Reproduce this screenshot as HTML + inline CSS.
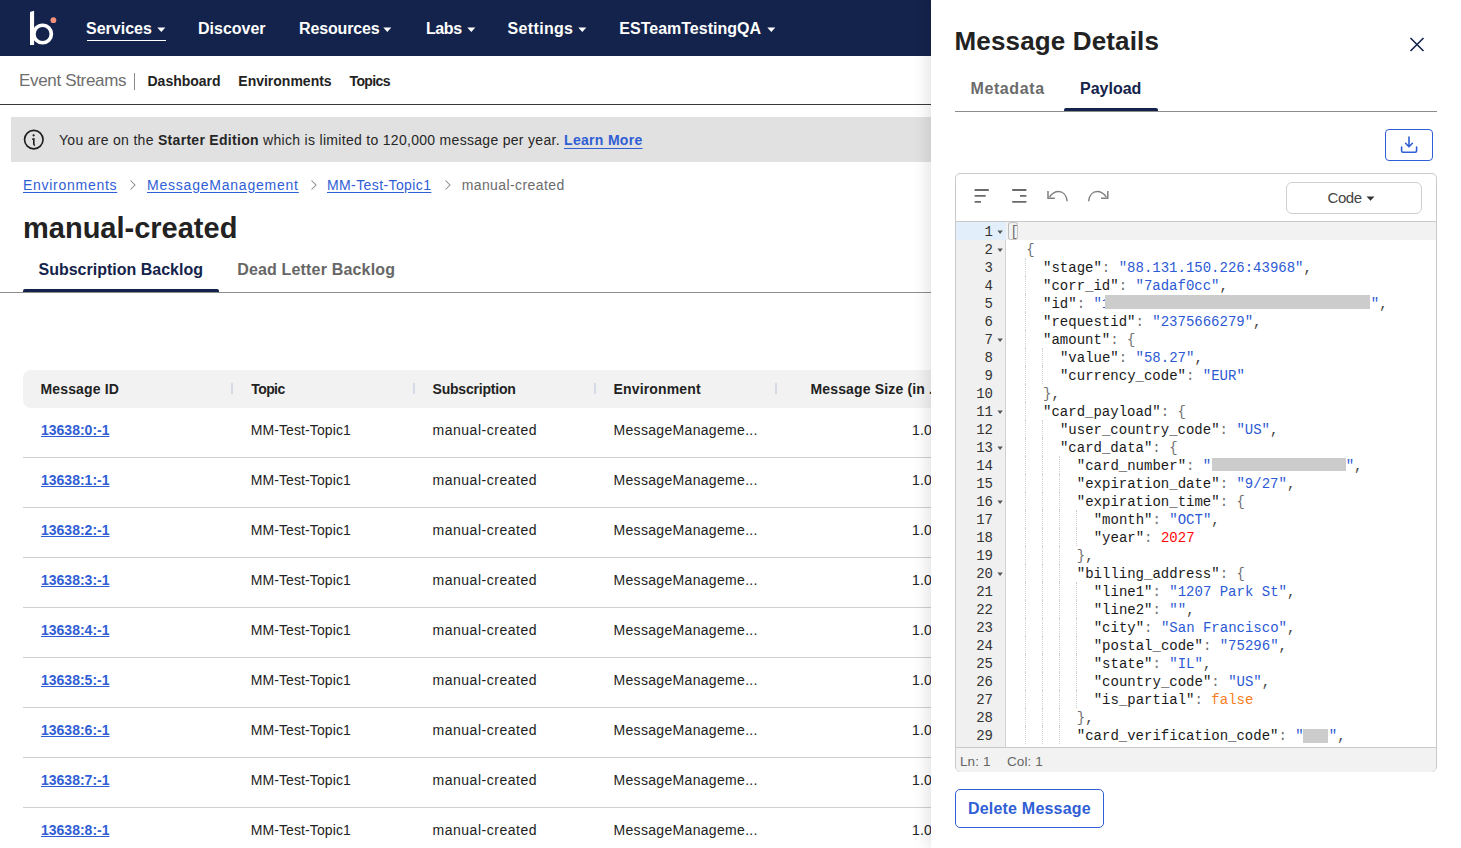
<!DOCTYPE html><html><head><meta charset="utf-8"><style>
html,body{margin:0;padding:0;width:1461px;height:848px;overflow:hidden;background:#fff;font-family:'Liberation Sans', sans-serif}
.t{position:absolute;white-space:pre}
.r{position:absolute}
.cl{position:absolute;white-space:pre;font-family:'Liberation Mono', monospace;font-size:14px;line-height:18px;height:18px}
.ln{position:absolute;right:13px;white-space:pre;font-family:'Liberation Mono', monospace;font-size:14px;line-height:18px;color:#333;text-align:right}
.ig{position:absolute;width:0;height:18px;border-left:1px dotted #cfcfcf}
</style></head><body><div class="r" style="left:0px;top:0px;width:1461px;height:56px;background:#14234b"></div>
<svg class="r" style="left:0;top:0" width="80" height="56" viewBox="0 0 80 56">
<path d="M30 12 L34.1 10.7 V45 H30 Z" fill="#fff"/>
<circle cx="42.6" cy="34" r="8.75" fill="none" stroke="#fff" stroke-width="3.7"/>
<circle cx="53.4" cy="20.2" r="2.9" fill="#f4917b"/>
</svg>
<div id="nav0" class="t" style="left:86.00px;top:21.46px;font-size:16px;line-height:16px;font-weight:700;color:#fff;letter-spacing:0px;font-family:'Liberation Sans', sans-serif;">Services</div>
<svg class="r" style="left:157.0px;top:26.9px" width="9" height="6" viewBox="0 0 9 6"><path d="M0.3 0.4 L8.3 0.4 L4.3 5 Z" fill="#fff"/></svg>
<div id="nav1" class="t" style="left:198.00px;top:21.46px;font-size:16px;line-height:16px;font-weight:700;color:#fff;letter-spacing:0px;font-family:'Liberation Sans', sans-serif;">Discover</div>
<div id="nav2" class="t" style="left:299.00px;top:21.46px;font-size:16px;line-height:16px;font-weight:700;color:#fff;letter-spacing:-0.15px;font-family:'Liberation Sans', sans-serif;">Resources</div>
<svg class="r" style="left:383.40000000000003px;top:26.9px" width="9" height="6" viewBox="0 0 9 6"><path d="M0.3 0.4 L8.3 0.4 L4.3 5 Z" fill="#fff"/></svg>
<div id="nav3" class="t" style="left:425.90px;top:21.46px;font-size:16px;line-height:16px;font-weight:700;color:#fff;letter-spacing:-0.35px;font-family:'Liberation Sans', sans-serif;">Labs</div>
<svg class="r" style="left:466.90000000000003px;top:26.9px" width="9" height="6" viewBox="0 0 9 6"><path d="M0.3 0.4 L8.3 0.4 L4.3 5 Z" fill="#fff"/></svg>
<div id="nav4" class="t" style="left:507.60px;top:21.46px;font-size:16px;line-height:16px;font-weight:700;color:#fff;letter-spacing:0.33px;font-family:'Liberation Sans', sans-serif;">Settings</div>
<svg class="r" style="left:577.6px;top:26.9px" width="9" height="6" viewBox="0 0 9 6"><path d="M0.3 0.4 L8.3 0.4 L4.3 5 Z" fill="#fff"/></svg>
<div id="nav5" class="t" style="left:619.30px;top:21.46px;font-size:16px;line-height:16px;font-weight:700;color:#fff;letter-spacing:0px;font-family:'Liberation Sans', sans-serif;">ESTeamTestingQA</div>
<svg class="r" style="left:766.6px;top:26.9px" width="9" height="6" viewBox="0 0 9 6"><path d="M0.3 0.4 L8.3 0.4 L4.3 5 Z" fill="#fff"/></svg>
<div class="r" style="left:87px;top:39.7px;width:79px;height:1.7px;background:#fff"></div>
<div id="es" class="t" style="left:19.00px;top:72.11px;font-size:17px;line-height:17px;font-weight:400;color:#6e6e6e;letter-spacing:-0.33px;font-family:'Liberation Sans', sans-serif;">Event Streams</div>
<div class="r" style="left:134.2px;top:73px;width:1.3px;height:16.7px;background:#8a8a8a"></div>
<div id="sn0" class="t" style="left:147.50px;top:74.15px;font-size:14px;line-height:14px;font-weight:700;color:#222222;letter-spacing:0px;font-family:'Liberation Sans', sans-serif;">Dashboard</div>
<div id="sn1" class="t" style="left:238.30px;top:74.15px;font-size:14px;line-height:14px;font-weight:700;color:#222222;letter-spacing:0px;font-family:'Liberation Sans', sans-serif;">Environments</div>
<div id="sn2" class="t" style="left:349.50px;top:74.15px;font-size:14px;line-height:14px;font-weight:700;color:#222222;letter-spacing:-0.6px;font-family:'Liberation Sans', sans-serif;">Topics</div>
<div class="r" style="left:0px;top:103.5px;width:1461px;height:1.2px;background:#3a3a3a"></div>
<div class="r" style="left:11px;top:117px;width:1450px;height:45px;background:#e1e1e1"></div>
<svg class="r" style="left:22px;top:128px" width="24" height="24" viewBox="0 0 24 24">
<circle cx="11.8" cy="11.6" r="9.25" fill="none" stroke="#1e1e1e" stroke-width="1.65"/>
<circle cx="11.6" cy="7.3" r="1.1" fill="#1e1e1e"/>
<path d="M10.2 11.2 L11.8 10.9 V16 Q11.9 17.1 12.9 17.4" fill="none" stroke="#1e1e1e" stroke-width="1.6"/>
</svg>
<div id="ban" class="t" style="left:59.00px;top:133.05px;font-size:14px;line-height:14px;font-weight:400;color:#262626;letter-spacing:0.3px;font-family:'Liberation Sans', sans-serif;">You are on the <b>Starter Edition</b> which is limited to 120,000 message per year. <span style="color:#2f5ed5;font-weight:700;text-decoration:underline;text-underline-offset:3px">Learn More</span></div>
<div id="bc0" class="t" style="left:23.00px;top:177.65px;font-size:14px;line-height:14px;font-weight:400;color:#2f5ed5;letter-spacing:0.72px;font-family:'Liberation Sans', sans-serif;text-decoration:underline;text-underline-offset:2px;">Environments</div>
<div id="bc1" class="t" style="left:147.00px;top:177.65px;font-size:14px;line-height:14px;font-weight:400;color:#2f5ed5;letter-spacing:0.78px;font-family:'Liberation Sans', sans-serif;text-decoration:underline;text-underline-offset:2px;">MessageManagement</div>
<div id="bc2" class="t" style="left:327.00px;top:177.65px;font-size:14px;line-height:14px;font-weight:400;color:#2f5ed5;letter-spacing:0.4px;font-family:'Liberation Sans', sans-serif;text-decoration:underline;text-underline-offset:2px;">MM-Test-Topic1</div>
<div id="bc3" class="t" style="left:461.70px;top:177.65px;font-size:14px;line-height:14px;font-weight:400;color:#6b6b6b;letter-spacing:0.4px;font-family:'Liberation Sans', sans-serif;">manual-created</div>
<svg class="r" style="left:129.4px;top:179px" width="8" height="12" viewBox="0 0 8 12"><path d="M1.5 1.5 L6 6 L1.5 10.5" fill="none" stroke="#8a8a8a" stroke-width="1.05"/></svg>
<svg class="r" style="left:310.09999999999997px;top:179px" width="8" height="12" viewBox="0 0 8 12"><path d="M1.5 1.5 L6 6 L1.5 10.5" fill="none" stroke="#8a8a8a" stroke-width="1.05"/></svg>
<svg class="r" style="left:443.79999999999995px;top:179px" width="8" height="12" viewBox="0 0 8 12"><path d="M1.5 1.5 L6 6 L1.5 10.5" fill="none" stroke="#8a8a8a" stroke-width="1.05"/></svg>
<div id="title" class="t" style="left:23.00px;top:213.95px;font-size:29px;line-height:29px;font-weight:700;color:#222222;letter-spacing:0px;font-family:'Liberation Sans', sans-serif;">manual-created</div>
<div id="tab0" class="t" style="left:38.50px;top:261.96px;font-size:16px;line-height:16px;font-weight:700;color:#14234b;letter-spacing:0px;font-family:'Liberation Sans', sans-serif;">Subscription Backlog</div>
<div id="tab1" class="t" style="left:237.20px;top:261.96px;font-size:16px;line-height:16px;font-weight:700;color:#666;letter-spacing:0.17px;font-family:'Liberation Sans', sans-serif;">Dead Letter Backlog</div>
<div class="r" style="left:0px;top:291.5px;width:1461px;height:1.2px;background:#8c8c8c"></div>
<div class="r" style="left:23px;top:289px;width:196px;height:3px;background:#14234b;border-radius:2px 2px 0 0"></div>
<div class="r" style="left:23px;top:370px;width:1438px;height:38px;background:#f2f2f2;border-radius:8px 0 0 8px"></div>
<div id="th0" class="t" style="left:40.50px;top:382.45px;font-size:14px;line-height:14px;font-weight:700;color:#222222;letter-spacing:0.15px;font-family:'Liberation Sans', sans-serif;">Message ID</div>
<div id="th1" class="t" style="left:251.30px;top:382.45px;font-size:14px;line-height:14px;font-weight:700;color:#222222;letter-spacing:-0.6px;font-family:'Liberation Sans', sans-serif;">Topic</div>
<div id="th2" class="t" style="left:432.50px;top:382.45px;font-size:14px;line-height:14px;font-weight:700;color:#222222;letter-spacing:-0.2px;font-family:'Liberation Sans', sans-serif;">Subscription</div>
<div id="th3" class="t" style="left:613.50px;top:382.45px;font-size:14px;line-height:14px;font-weight:700;color:#222222;letter-spacing:0.15px;font-family:'Liberation Sans', sans-serif;">Environment</div>
<div id="th4" class="t" style="left:810.50px;top:382.45px;font-size:14px;line-height:14px;font-weight:700;color:#222222;letter-spacing:0.15px;font-family:'Liberation Sans', sans-serif;">Message Size (in ...</div>
<div class="r" style="left:231px;top:383px;width:2px;height:11px;background:#d6dae8"></div>
<div class="r" style="left:413px;top:383px;width:2px;height:11px;background:#d6dae8"></div>
<div class="r" style="left:594px;top:383px;width:2px;height:11px;background:#d6dae8"></div>
<div class="r" style="left:775px;top:383px;width:2px;height:11px;background:#d6dae8"></div>
<div id="id0" class="t" style="left:41.00px;top:422.85px;font-size:14px;line-height:14px;font-weight:700;color:#2f5ed5;letter-spacing:0px;font-family:'Liberation Sans', sans-serif;text-decoration:underline;text-underline-offset:1.3px;">13638:0:-1</div>
<div id="ra0" class="t" style="left:250.70px;top:422.85px;font-size:14px;line-height:14px;font-weight:400;color:#222222;letter-spacing:0.1px;font-family:'Liberation Sans', sans-serif;">MM-Test-Topic1</div>
<div id="rb0" class="t" style="left:432.50px;top:422.85px;font-size:14px;line-height:14px;font-weight:400;color:#222222;letter-spacing:0.52px;font-family:'Liberation Sans', sans-serif;">manual-created</div>
<div id="rc0" class="t" style="left:613.50px;top:422.85px;font-size:14px;line-height:14px;font-weight:400;color:#222222;letter-spacing:0.32px;font-family:'Liberation Sans', sans-serif;">MessageManageme...</div>
<div id="rd0" class="t" style="left:912.00px;top:422.85px;font-size:14px;line-height:14px;font-weight:400;color:#222222;letter-spacing:0.1px;font-family:'Liberation Sans', sans-serif;">1.0</div>
<div class="r" style="left:23px;top:457px;width:1438px;height:1.2px;background:#cfcfcf"></div>
<div id="id1" class="t" style="left:41.00px;top:472.85px;font-size:14px;line-height:14px;font-weight:700;color:#2f5ed5;letter-spacing:0px;font-family:'Liberation Sans', sans-serif;text-decoration:underline;text-underline-offset:1.3px;">13638:1:-1</div>
<div id="ra1" class="t" style="left:250.70px;top:472.85px;font-size:14px;line-height:14px;font-weight:400;color:#222222;letter-spacing:0.1px;font-family:'Liberation Sans', sans-serif;">MM-Test-Topic1</div>
<div id="rb1" class="t" style="left:432.50px;top:472.85px;font-size:14px;line-height:14px;font-weight:400;color:#222222;letter-spacing:0.52px;font-family:'Liberation Sans', sans-serif;">manual-created</div>
<div id="rc1" class="t" style="left:613.50px;top:472.85px;font-size:14px;line-height:14px;font-weight:400;color:#222222;letter-spacing:0.32px;font-family:'Liberation Sans', sans-serif;">MessageManageme...</div>
<div id="rd1" class="t" style="left:912.00px;top:472.85px;font-size:14px;line-height:14px;font-weight:400;color:#222222;letter-spacing:0.1px;font-family:'Liberation Sans', sans-serif;">1.0</div>
<div class="r" style="left:23px;top:507px;width:1438px;height:1.2px;background:#cfcfcf"></div>
<div id="id2" class="t" style="left:41.00px;top:522.85px;font-size:14px;line-height:14px;font-weight:700;color:#2f5ed5;letter-spacing:0px;font-family:'Liberation Sans', sans-serif;text-decoration:underline;text-underline-offset:1.3px;">13638:2:-1</div>
<div id="ra2" class="t" style="left:250.70px;top:522.85px;font-size:14px;line-height:14px;font-weight:400;color:#222222;letter-spacing:0.1px;font-family:'Liberation Sans', sans-serif;">MM-Test-Topic1</div>
<div id="rb2" class="t" style="left:432.50px;top:522.85px;font-size:14px;line-height:14px;font-weight:400;color:#222222;letter-spacing:0.52px;font-family:'Liberation Sans', sans-serif;">manual-created</div>
<div id="rc2" class="t" style="left:613.50px;top:522.85px;font-size:14px;line-height:14px;font-weight:400;color:#222222;letter-spacing:0.32px;font-family:'Liberation Sans', sans-serif;">MessageManageme...</div>
<div id="rd2" class="t" style="left:912.00px;top:522.85px;font-size:14px;line-height:14px;font-weight:400;color:#222222;letter-spacing:0.1px;font-family:'Liberation Sans', sans-serif;">1.0</div>
<div class="r" style="left:23px;top:557px;width:1438px;height:1.2px;background:#cfcfcf"></div>
<div id="id3" class="t" style="left:41.00px;top:572.85px;font-size:14px;line-height:14px;font-weight:700;color:#2f5ed5;letter-spacing:0px;font-family:'Liberation Sans', sans-serif;text-decoration:underline;text-underline-offset:1.3px;">13638:3:-1</div>
<div id="ra3" class="t" style="left:250.70px;top:572.85px;font-size:14px;line-height:14px;font-weight:400;color:#222222;letter-spacing:0.1px;font-family:'Liberation Sans', sans-serif;">MM-Test-Topic1</div>
<div id="rb3" class="t" style="left:432.50px;top:572.85px;font-size:14px;line-height:14px;font-weight:400;color:#222222;letter-spacing:0.52px;font-family:'Liberation Sans', sans-serif;">manual-created</div>
<div id="rc3" class="t" style="left:613.50px;top:572.85px;font-size:14px;line-height:14px;font-weight:400;color:#222222;letter-spacing:0.32px;font-family:'Liberation Sans', sans-serif;">MessageManageme...</div>
<div id="rd3" class="t" style="left:912.00px;top:572.85px;font-size:14px;line-height:14px;font-weight:400;color:#222222;letter-spacing:0.1px;font-family:'Liberation Sans', sans-serif;">1.0</div>
<div class="r" style="left:23px;top:607px;width:1438px;height:1.2px;background:#cfcfcf"></div>
<div id="id4" class="t" style="left:41.00px;top:622.85px;font-size:14px;line-height:14px;font-weight:700;color:#2f5ed5;letter-spacing:0px;font-family:'Liberation Sans', sans-serif;text-decoration:underline;text-underline-offset:1.3px;">13638:4:-1</div>
<div id="ra4" class="t" style="left:250.70px;top:622.85px;font-size:14px;line-height:14px;font-weight:400;color:#222222;letter-spacing:0.1px;font-family:'Liberation Sans', sans-serif;">MM-Test-Topic1</div>
<div id="rb4" class="t" style="left:432.50px;top:622.85px;font-size:14px;line-height:14px;font-weight:400;color:#222222;letter-spacing:0.52px;font-family:'Liberation Sans', sans-serif;">manual-created</div>
<div id="rc4" class="t" style="left:613.50px;top:622.85px;font-size:14px;line-height:14px;font-weight:400;color:#222222;letter-spacing:0.32px;font-family:'Liberation Sans', sans-serif;">MessageManageme...</div>
<div id="rd4" class="t" style="left:912.00px;top:622.85px;font-size:14px;line-height:14px;font-weight:400;color:#222222;letter-spacing:0.1px;font-family:'Liberation Sans', sans-serif;">1.0</div>
<div class="r" style="left:23px;top:657px;width:1438px;height:1.2px;background:#cfcfcf"></div>
<div id="id5" class="t" style="left:41.00px;top:672.85px;font-size:14px;line-height:14px;font-weight:700;color:#2f5ed5;letter-spacing:0px;font-family:'Liberation Sans', sans-serif;text-decoration:underline;text-underline-offset:1.3px;">13638:5:-1</div>
<div id="ra5" class="t" style="left:250.70px;top:672.85px;font-size:14px;line-height:14px;font-weight:400;color:#222222;letter-spacing:0.1px;font-family:'Liberation Sans', sans-serif;">MM-Test-Topic1</div>
<div id="rb5" class="t" style="left:432.50px;top:672.85px;font-size:14px;line-height:14px;font-weight:400;color:#222222;letter-spacing:0.52px;font-family:'Liberation Sans', sans-serif;">manual-created</div>
<div id="rc5" class="t" style="left:613.50px;top:672.85px;font-size:14px;line-height:14px;font-weight:400;color:#222222;letter-spacing:0.32px;font-family:'Liberation Sans', sans-serif;">MessageManageme...</div>
<div id="rd5" class="t" style="left:912.00px;top:672.85px;font-size:14px;line-height:14px;font-weight:400;color:#222222;letter-spacing:0.1px;font-family:'Liberation Sans', sans-serif;">1.0</div>
<div class="r" style="left:23px;top:707px;width:1438px;height:1.2px;background:#cfcfcf"></div>
<div id="id6" class="t" style="left:41.00px;top:722.85px;font-size:14px;line-height:14px;font-weight:700;color:#2f5ed5;letter-spacing:0px;font-family:'Liberation Sans', sans-serif;text-decoration:underline;text-underline-offset:1.3px;">13638:6:-1</div>
<div id="ra6" class="t" style="left:250.70px;top:722.85px;font-size:14px;line-height:14px;font-weight:400;color:#222222;letter-spacing:0.1px;font-family:'Liberation Sans', sans-serif;">MM-Test-Topic1</div>
<div id="rb6" class="t" style="left:432.50px;top:722.85px;font-size:14px;line-height:14px;font-weight:400;color:#222222;letter-spacing:0.52px;font-family:'Liberation Sans', sans-serif;">manual-created</div>
<div id="rc6" class="t" style="left:613.50px;top:722.85px;font-size:14px;line-height:14px;font-weight:400;color:#222222;letter-spacing:0.32px;font-family:'Liberation Sans', sans-serif;">MessageManageme...</div>
<div id="rd6" class="t" style="left:912.00px;top:722.85px;font-size:14px;line-height:14px;font-weight:400;color:#222222;letter-spacing:0.1px;font-family:'Liberation Sans', sans-serif;">1.0</div>
<div class="r" style="left:23px;top:757px;width:1438px;height:1.2px;background:#cfcfcf"></div>
<div id="id7" class="t" style="left:41.00px;top:772.85px;font-size:14px;line-height:14px;font-weight:700;color:#2f5ed5;letter-spacing:0px;font-family:'Liberation Sans', sans-serif;text-decoration:underline;text-underline-offset:1.3px;">13638:7:-1</div>
<div id="ra7" class="t" style="left:250.70px;top:772.85px;font-size:14px;line-height:14px;font-weight:400;color:#222222;letter-spacing:0.1px;font-family:'Liberation Sans', sans-serif;">MM-Test-Topic1</div>
<div id="rb7" class="t" style="left:432.50px;top:772.85px;font-size:14px;line-height:14px;font-weight:400;color:#222222;letter-spacing:0.52px;font-family:'Liberation Sans', sans-serif;">manual-created</div>
<div id="rc7" class="t" style="left:613.50px;top:772.85px;font-size:14px;line-height:14px;font-weight:400;color:#222222;letter-spacing:0.32px;font-family:'Liberation Sans', sans-serif;">MessageManageme...</div>
<div id="rd7" class="t" style="left:912.00px;top:772.85px;font-size:14px;line-height:14px;font-weight:400;color:#222222;letter-spacing:0.1px;font-family:'Liberation Sans', sans-serif;">1.0</div>
<div class="r" style="left:23px;top:807px;width:1438px;height:1.2px;background:#cfcfcf"></div>
<div id="id8" class="t" style="left:41.00px;top:822.85px;font-size:14px;line-height:14px;font-weight:700;color:#2f5ed5;letter-spacing:0px;font-family:'Liberation Sans', sans-serif;text-decoration:underline;text-underline-offset:1.3px;">13638:8:-1</div>
<div id="ra8" class="t" style="left:250.70px;top:822.85px;font-size:14px;line-height:14px;font-weight:400;color:#222222;letter-spacing:0.1px;font-family:'Liberation Sans', sans-serif;">MM-Test-Topic1</div>
<div id="rb8" class="t" style="left:432.50px;top:822.85px;font-size:14px;line-height:14px;font-weight:400;color:#222222;letter-spacing:0.52px;font-family:'Liberation Sans', sans-serif;">manual-created</div>
<div id="rc8" class="t" style="left:613.50px;top:822.85px;font-size:14px;line-height:14px;font-weight:400;color:#222222;letter-spacing:0.32px;font-family:'Liberation Sans', sans-serif;">MessageManageme...</div>
<div id="rd8" class="t" style="left:912.00px;top:822.85px;font-size:14px;line-height:14px;font-weight:400;color:#222222;letter-spacing:0.1px;font-family:'Liberation Sans', sans-serif;">1.0</div>
<div class="r" style="left:931px;top:0;width:530px;height:848px;background:#fff;box-shadow:-4px 0 14px rgba(0,0,0,0.11)"></div>
<div id="md" class="t" style="left:954.50px;top:27.99px;font-size:26px;line-height:26px;font-weight:700;color:#222222;letter-spacing:0.15px;font-family:'Liberation Sans', sans-serif;">Message Details</div>
<svg class="r" style="left:1408px;top:36px" width="18" height="17" viewBox="0 0 18 17"><path d="M2.5 2 L15.5 15 M15.5 2 L2.5 15" stroke="#14234b" stroke-width="1.6"/></svg>
<div id="pt0" class="t" style="left:970.50px;top:80.66px;font-size:16px;line-height:16px;font-weight:700;color:#6b6b6b;letter-spacing:0.6px;font-family:'Liberation Sans', sans-serif;">Metadata</div>
<div id="pt1" class="t" style="left:1080.00px;top:80.66px;font-size:16px;line-height:16px;font-weight:700;color:#14234b;letter-spacing:0px;font-family:'Liberation Sans', sans-serif;">Payload</div>
<div class="r" style="left:955px;top:110.5px;width:482px;height:1.2px;background:#8c8c8c"></div>
<div class="r" style="left:1064px;top:108px;width:94px;height:3px;background:#14234b;border-radius:2px 2px 0 0"></div>
<div class="r" style="left:1385px;top:129px;width:45.5px;height:29.5px;border:1.3px solid #2f5ed5;border-radius:4px"></div>
<svg class="r" style="left:1398px;top:134px" width="22" height="22" viewBox="1398 134 22 22">
<path d="M1409 137 V146.5 M1405.6 143.3 L1409 146.8 L1412.4 143.3" fill="none" stroke="#2f5ed5" stroke-width="1.6" stroke-linecap="round" stroke-linejoin="round"/>
<path d="M1401.6 147 V150.8 Q1401.6 152.2 1403 152.2 H1415.2 Q1416.6 152.2 1416.6 150.8 V147" fill="none" stroke="#2f5ed5" stroke-width="1.6" stroke-linecap="round"/>
</svg>
<div class="r" style="left:955px;top:173.2px;width:480px;height:597.3px;border:1.2px solid #c9c9c9;border-radius:5px;overflow:hidden;background:#fff"></div>
<div class="r" style="left:956px;top:221px;width:480px;height:1.2px;background:#c9c9c9"></div>
<svg class="r" style="left:970px;top:184px" width="150" height="24" viewBox="970 184 150 24">
<path d="M974.6 190 H988.8 M974.6 195.9 H985.7 M974.6 201.9 H981" stroke="#6a6a6a" stroke-width="1.9"/>
<path d="M1012.2 190 H1026.4 M1020 195.9 H1026.4 M1012.2 201.9 H1026.4" stroke="#6a6a6a" stroke-width="1.9"/>
<path d="M1049.5 197 C1052.5 193 1055.5 191.6 1058.5 191.6 C1063 191.6 1066.6 195.2 1067.2 201.2" fill="none" stroke="#808080" stroke-width="1.5"/>
<path d="M1048 191 V198.2 H1054.8" fill="none" stroke="#808080" stroke-width="1.5"/>
<path d="M1106.3 197 C1103.3 193 1100.3 191.6 1097.3 191.6 C1092.8 191.6 1089.2 195.2 1088.6 201.2" fill="none" stroke="#808080" stroke-width="1.5"/>
<path d="M1107.8 191 V198.2 H1101" fill="none" stroke="#808080" stroke-width="1.5"/>
</svg>
<div class="r" style="left:1286px;top:182px;width:134px;height:30px;border:1.2px solid #cfcfcf;border-radius:6px"></div>
<div id="code" class="t" style="left:1327.50px;top:190.10px;font-size:15px;line-height:15px;font-weight:400;color:#444;letter-spacing:-0.45px;font-family:'Liberation Sans', sans-serif;">Code</div>
<svg class="r" style="left:1365.5px;top:196.3px" width="9" height="6" viewBox="0 0 9 6"><path d="M0.5 0.5 L8.5 0.5 L4.5 4.8 Z" fill="#333"/></svg>
<div class="r" style="left:956px;top:222px;width:49.5px;height:525px;background:#f0f0f0"></div>
<div class="r" style="left:1005px;top:222px;width:1px;height:525px;background:#d0d0d0"></div>
<div class="r" style="left:956px;top:222px;width:49.5px;height:18px;background:#e2eefa"></div>
<div class="r" style="left:1006px;top:222px;width:430px;height:18px;background:#f2f2f2"></div>
<div class="r" style="left:1006px;top:222px;width:430px;height:525px;overflow:hidden">
<div class="cl" id="L1" style="top:1px;left:3.30px"><span style="position:relative;left:1px"><span style="color:#707070">[</span></span></div>
<div class="cl" id="L2" style="top:19px;left:20.18px"><span style="color:#707070">{</span></div>
<div class="cl" id="L3" style="top:37px;left:37.06px"><span style="color:#1a1a1a">"stage"</span><span style="color:#707070">:</span> <span style="color:#2c5ad4">"88.131.150.226:43968"</span><span style="color:#444">,</span></div>
<div class="ig" style="left:19.38px;top:36px"></div>
<div class="cl" id="L4" style="top:55px;left:37.06px"><span style="color:#1a1a1a">"corr_id"</span><span style="color:#707070">:</span> <span style="color:#2c5ad4">"7adaf0cc"</span><span style="color:#444">,</span></div>
<div class="ig" style="left:19.38px;top:54px"></div>
<div class="cl" id="L5" style="top:73px;left:37.06px"><span style="color:#1a1a1a">"id"</span><span style="color:#707070">:</span> <span style="color:#2c5ad4">"1                               "</span><span style="color:#444">,</span></div>
<div class="ig" style="left:19.38px;top:72px"></div>
<div class="cl" id="L6" style="top:91px;left:37.06px"><span style="color:#1a1a1a">"requestid"</span><span style="color:#707070">:</span> <span style="color:#2c5ad4">"2375666279"</span><span style="color:#444">,</span></div>
<div class="ig" style="left:19.38px;top:90px"></div>
<div class="cl" id="L7" style="top:109px;left:37.06px"><span style="color:#1a1a1a">"amount"</span><span style="color:#707070">:</span> <span style="color:#707070">{</span></div>
<div class="ig" style="left:19.38px;top:108px"></div>
<div class="cl" id="L8" style="top:127px;left:53.94px"><span style="color:#1a1a1a">"value"</span><span style="color:#707070">:</span> <span style="color:#2c5ad4">"58.27"</span><span style="color:#444">,</span></div>
<div class="ig" style="left:19.38px;top:126px"></div>
<div class="ig" style="left:36.26px;top:126px"></div>
<div class="cl" id="L9" style="top:145px;left:53.94px"><span style="color:#1a1a1a">"currency_code"</span><span style="color:#707070">:</span> <span style="color:#2c5ad4">"EUR"</span></div>
<div class="ig" style="left:19.38px;top:144px"></div>
<div class="ig" style="left:36.26px;top:144px"></div>
<div class="cl" id="L10" style="top:163px;left:37.06px"><span style="color:#707070">}</span><span style="color:#444">,</span></div>
<div class="ig" style="left:19.38px;top:162px"></div>
<div class="cl" id="L11" style="top:181px;left:37.06px"><span style="color:#1a1a1a">"card_payload"</span><span style="color:#707070">:</span> <span style="color:#707070">{</span></div>
<div class="ig" style="left:19.38px;top:180px"></div>
<div class="cl" id="L12" style="top:199px;left:53.94px"><span style="color:#1a1a1a">"user_country_code"</span><span style="color:#707070">:</span> <span style="color:#2c5ad4">"US"</span><span style="color:#444">,</span></div>
<div class="ig" style="left:19.38px;top:198px"></div>
<div class="ig" style="left:36.26px;top:198px"></div>
<div class="cl" id="L13" style="top:217px;left:53.94px"><span style="color:#1a1a1a">"card_data"</span><span style="color:#707070">:</span> <span style="color:#707070">{</span></div>
<div class="ig" style="left:19.38px;top:216px"></div>
<div class="ig" style="left:36.26px;top:216px"></div>
<div class="cl" id="L14" style="top:235px;left:70.82px"><span style="color:#1a1a1a">"card_number"</span><span style="color:#707070">:</span> <span style="color:#2c5ad4">"                "</span><span style="color:#444">,</span></div>
<div class="ig" style="left:19.38px;top:234px"></div>
<div class="ig" style="left:36.26px;top:234px"></div>
<div class="ig" style="left:53.14px;top:234px"></div>
<div class="cl" id="L15" style="top:253px;left:70.82px"><span style="color:#1a1a1a">"expiration_date"</span><span style="color:#707070">:</span> <span style="color:#2c5ad4">"9/27"</span><span style="color:#444">,</span></div>
<div class="ig" style="left:19.38px;top:252px"></div>
<div class="ig" style="left:36.26px;top:252px"></div>
<div class="ig" style="left:53.14px;top:252px"></div>
<div class="cl" id="L16" style="top:271px;left:70.82px"><span style="color:#1a1a1a">"expiration_time"</span><span style="color:#707070">:</span> <span style="color:#707070">{</span></div>
<div class="ig" style="left:19.38px;top:270px"></div>
<div class="ig" style="left:36.26px;top:270px"></div>
<div class="ig" style="left:53.14px;top:270px"></div>
<div class="cl" id="L17" style="top:289px;left:87.70px"><span style="color:#1a1a1a">"month"</span><span style="color:#707070">:</span> <span style="color:#2c5ad4">"OCT"</span><span style="color:#444">,</span></div>
<div class="ig" style="left:19.38px;top:288px"></div>
<div class="ig" style="left:36.26px;top:288px"></div>
<div class="ig" style="left:53.14px;top:288px"></div>
<div class="ig" style="left:70.02px;top:288px"></div>
<div class="cl" id="L18" style="top:307px;left:87.70px"><span style="color:#1a1a1a">"year"</span><span style="color:#707070">:</span> <span style="color:#ff0a0a">2027</span></div>
<div class="ig" style="left:19.38px;top:306px"></div>
<div class="ig" style="left:36.26px;top:306px"></div>
<div class="ig" style="left:53.14px;top:306px"></div>
<div class="ig" style="left:70.02px;top:306px"></div>
<div class="cl" id="L19" style="top:325px;left:70.82px"><span style="color:#707070">}</span><span style="color:#444">,</span></div>
<div class="ig" style="left:19.38px;top:324px"></div>
<div class="ig" style="left:36.26px;top:324px"></div>
<div class="ig" style="left:53.14px;top:324px"></div>
<div class="cl" id="L20" style="top:343px;left:70.82px"><span style="color:#1a1a1a">"billing_address"</span><span style="color:#707070">:</span> <span style="color:#707070">{</span></div>
<div class="ig" style="left:19.38px;top:342px"></div>
<div class="ig" style="left:36.26px;top:342px"></div>
<div class="ig" style="left:53.14px;top:342px"></div>
<div class="cl" id="L21" style="top:361px;left:87.70px"><span style="color:#1a1a1a">"line1"</span><span style="color:#707070">:</span> <span style="color:#2c5ad4">"1207 Park St"</span><span style="color:#444">,</span></div>
<div class="ig" style="left:19.38px;top:360px"></div>
<div class="ig" style="left:36.26px;top:360px"></div>
<div class="ig" style="left:53.14px;top:360px"></div>
<div class="ig" style="left:70.02px;top:360px"></div>
<div class="cl" id="L22" style="top:379px;left:87.70px"><span style="color:#1a1a1a">"line2"</span><span style="color:#707070">:</span> <span style="color:#2c5ad4">""</span><span style="color:#444">,</span></div>
<div class="ig" style="left:19.38px;top:378px"></div>
<div class="ig" style="left:36.26px;top:378px"></div>
<div class="ig" style="left:53.14px;top:378px"></div>
<div class="ig" style="left:70.02px;top:378px"></div>
<div class="cl" id="L23" style="top:397px;left:87.70px"><span style="color:#1a1a1a">"city"</span><span style="color:#707070">:</span> <span style="color:#2c5ad4">"San Francisco"</span><span style="color:#444">,</span></div>
<div class="ig" style="left:19.38px;top:396px"></div>
<div class="ig" style="left:36.26px;top:396px"></div>
<div class="ig" style="left:53.14px;top:396px"></div>
<div class="ig" style="left:70.02px;top:396px"></div>
<div class="cl" id="L24" style="top:415px;left:87.70px"><span style="color:#1a1a1a">"postal_code"</span><span style="color:#707070">:</span> <span style="color:#2c5ad4">"75296"</span><span style="color:#444">,</span></div>
<div class="ig" style="left:19.38px;top:414px"></div>
<div class="ig" style="left:36.26px;top:414px"></div>
<div class="ig" style="left:53.14px;top:414px"></div>
<div class="ig" style="left:70.02px;top:414px"></div>
<div class="cl" id="L25" style="top:433px;left:87.70px"><span style="color:#1a1a1a">"state"</span><span style="color:#707070">:</span> <span style="color:#2c5ad4">"IL"</span><span style="color:#444">,</span></div>
<div class="ig" style="left:19.38px;top:432px"></div>
<div class="ig" style="left:36.26px;top:432px"></div>
<div class="ig" style="left:53.14px;top:432px"></div>
<div class="ig" style="left:70.02px;top:432px"></div>
<div class="cl" id="L26" style="top:451px;left:87.70px"><span style="color:#1a1a1a">"country_code"</span><span style="color:#707070">:</span> <span style="color:#2c5ad4">"US"</span><span style="color:#444">,</span></div>
<div class="ig" style="left:19.38px;top:450px"></div>
<div class="ig" style="left:36.26px;top:450px"></div>
<div class="ig" style="left:53.14px;top:450px"></div>
<div class="ig" style="left:70.02px;top:450px"></div>
<div class="cl" id="L27" style="top:469px;left:87.70px"><span style="color:#1a1a1a">"is_partial"</span><span style="color:#707070">:</span> <span style="color:#fa7d1c">false</span></div>
<div class="ig" style="left:19.38px;top:468px"></div>
<div class="ig" style="left:36.26px;top:468px"></div>
<div class="ig" style="left:53.14px;top:468px"></div>
<div class="ig" style="left:70.02px;top:468px"></div>
<div class="cl" id="L28" style="top:487px;left:70.82px"><span style="color:#707070">}</span><span style="color:#444">,</span></div>
<div class="ig" style="left:19.38px;top:486px"></div>
<div class="ig" style="left:36.26px;top:486px"></div>
<div class="ig" style="left:53.14px;top:486px"></div>
<div class="cl" id="L29" style="top:505px;left:70.82px"><span style="color:#1a1a1a">"card_verification_code"</span><span style="color:#707070">:</span> <span style="color:#2c5ad4">"   "</span><span style="color:#444">,</span></div>
<div class="ig" style="left:19.38px;top:504px"></div>
<div class="ig" style="left:36.26px;top:504px"></div>
<div class="ig" style="left:53.14px;top:504px"></div>
</div>
<div class="r" style="left:956px;top:222px;width:50px;height:525px;overflow:hidden">
<div class="ln" style="top:1px">1</div>
<svg class="r" style="left:41px;top:7.6px" width="7" height="5" viewBox="0 0 7 5"><path d="M0.4 0.6 H5.8 L3.1 3.9 Z" fill="#555"/></svg>
<div class="ln" style="top:19px">2</div>
<svg class="r" style="left:41px;top:25.6px" width="7" height="5" viewBox="0 0 7 5"><path d="M0.4 0.6 H5.8 L3.1 3.9 Z" fill="#555"/></svg>
<div class="ln" style="top:37px">3</div>
<div class="ln" style="top:55px">4</div>
<div class="ln" style="top:73px">5</div>
<div class="ln" style="top:91px">6</div>
<div class="ln" style="top:109px">7</div>
<svg class="r" style="left:41px;top:115.6px" width="7" height="5" viewBox="0 0 7 5"><path d="M0.4 0.6 H5.8 L3.1 3.9 Z" fill="#555"/></svg>
<div class="ln" style="top:127px">8</div>
<div class="ln" style="top:145px">9</div>
<div class="ln" style="top:163px">10</div>
<div class="ln" style="top:181px">11</div>
<svg class="r" style="left:41px;top:187.6px" width="7" height="5" viewBox="0 0 7 5"><path d="M0.4 0.6 H5.8 L3.1 3.9 Z" fill="#555"/></svg>
<div class="ln" style="top:199px">12</div>
<div class="ln" style="top:217px">13</div>
<svg class="r" style="left:41px;top:223.6px" width="7" height="5" viewBox="0 0 7 5"><path d="M0.4 0.6 H5.8 L3.1 3.9 Z" fill="#555"/></svg>
<div class="ln" style="top:235px">14</div>
<div class="ln" style="top:253px">15</div>
<div class="ln" style="top:271px">16</div>
<svg class="r" style="left:41px;top:277.6px" width="7" height="5" viewBox="0 0 7 5"><path d="M0.4 0.6 H5.8 L3.1 3.9 Z" fill="#555"/></svg>
<div class="ln" style="top:289px">17</div>
<div class="ln" style="top:307px">18</div>
<div class="ln" style="top:325px">19</div>
<div class="ln" style="top:343px">20</div>
<svg class="r" style="left:41px;top:349.6px" width="7" height="5" viewBox="0 0 7 5"><path d="M0.4 0.6 H5.8 L3.1 3.9 Z" fill="#555"/></svg>
<div class="ln" style="top:361px">21</div>
<div class="ln" style="top:379px">22</div>
<div class="ln" style="top:397px">23</div>
<div class="ln" style="top:415px">24</div>
<div class="ln" style="top:433px">25</div>
<div class="ln" style="top:451px">26</div>
<div class="ln" style="top:469px">27</div>
<div class="ln" style="top:487px">28</div>
<div class="ln" style="top:505px">29</div>
<div class="ln" style="top:523px">30</div>
</div>
<div class="r" style="left:1008.4px;top:222px;width:9.4px;height:18px;border:1px solid #c4c4c4;border-left:1.6px solid #bdbdbd;border-radius:3px;box-sizing:border-box"></div>
<div class="r" style="left:1105px;top:295px;width:265px;height:14px;background:#cccccc"></div>
<div class="r" style="left:1212px;top:458px;width:134px;height:13px;background:#cccccc"></div>
<div class="r" style="left:1303px;top:729px;width:25px;height:14px;background:#cccccc"></div>
<div class="r" style="left:956px;top:747px;width:480px;height:24px;background:#f2f2f2;border-top:1.2px solid #c9c9c9;border-radius:0 0 5px 5px"></div>
<div id="ln" class="t" style="left:960.00px;top:754.57px;font-size:13.5px;line-height:13.5px;font-weight:400;color:#666;letter-spacing:0.1px;font-family:'Liberation Sans', sans-serif;">Ln: 1</div>
<div id="col" class="t" style="left:1007.00px;top:754.57px;font-size:13.5px;line-height:13.5px;font-weight:400;color:#666;letter-spacing:0.1px;font-family:'Liberation Sans', sans-serif;">Col: 1</div>
<div class="r" style="left:955px;top:789.2px;width:146.6px;height:36.8px;border:1.4px solid #2f5ed5;border-radius:5px"></div>
<div id="del" class="t" style="left:968.00px;top:800.86px;font-size:16px;line-height:16px;font-weight:700;color:#2f5ed5;letter-spacing:0.2px;font-family:'Liberation Sans', sans-serif;">Delete Message</div></body></html>
